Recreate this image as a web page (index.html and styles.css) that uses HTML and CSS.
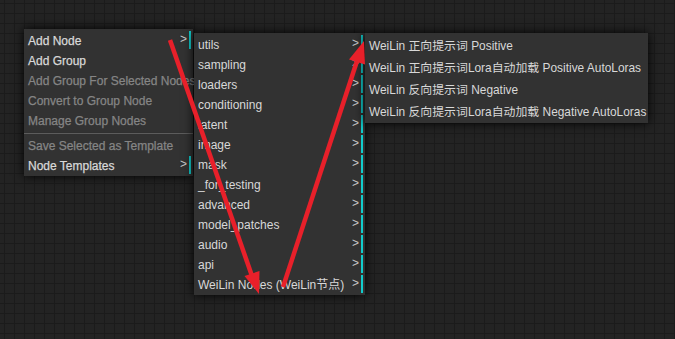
FILE: index.html
```html
<!DOCTYPE html>
<html lang="en">
<head>
<meta charset="utf-8">
<title>Context menu</title>
<link rel="stylesheet" href="styles.css">
</head>
<body>
<div class="canvas">
  <div class="menu menu-main">
    <div class="entry sub">Add Node</div>
    <div class="entry">Add Group</div>
    <div class="entry disabled">Add Group For Selected Nodes</div>
    <div class="entry disabled">Convert to Group Node</div>
    <div class="entry disabled">Manage Group Nodes</div>
    <div class="separator"></div>
    <div class="entry disabled">Save Selected as Template</div>
    <div class="entry sub">Node Templates</div>
  </div>
  <div class="menu menu-cats">
    <div class="entry sub">utils</div>
    <div class="entry sub">sampling</div>
    <div class="entry sub">loaders</div>
    <div class="entry sub">conditioning</div>
    <div class="entry sub">latent</div>
    <div class="entry sub">image</div>
    <div class="entry sub">mask</div>
    <div class="entry sub">_for_testing</div>
    <div class="entry sub">advanced</div>
    <div class="entry sub">model_patches</div>
    <div class="entry sub">audio</div>
    <div class="entry sub">api</div>
    <div class="entry sub">WeiLin Nodes (WeiLin节点)</div>
  </div>
  <div class="menu menu-weilin">
    <div class="entry">WeiLin 正向提示词 Positive</div>
    <div class="entry">WeiLin 正向提示词Lora自动加载 Positive AutoLoras</div>
    <div class="entry">WeiLin 反向提示词 Negative</div>
    <div class="entry">WeiLin 反向提示词Lora自动加载 Negative AutoLoras</div>
  </div>
  <svg class="annot" width="675" height="339" viewBox="0 0 675 339">
    <line x1="170" y1="40" x2="252" y2="276" class="arrow-line"/>
    <polygon points="259,294 259.5,271 244.5,276" class="arrow-head"/>
    <line x1="283" y1="287" x2="357" y2="61" class="arrow-line"/>
    <polygon points="364,41 365,64.5 349,59.5" class="arrow-head"/>
  </svg>
</div>
</body>
</html>
```

FILE: styles.css
```css
html, body {
  margin: 0;
  padding: 0;
}

body {
  width: 675px;
  height: 339px;
  overflow: hidden;
  background-color: #232323;
  background-image:
    linear-gradient(#1b1b1b 1px, transparent 1px),
    linear-gradient(90deg, #1b1b1b 1px, transparent 1px);
  background-size: 10px 10px;
  background-position: 4px 3px;
  font-family: "Liberation Sans", "Noto Sans CJK SC", sans-serif;
}

.canvas {
  position: relative;
  width: 675px;
  height: 339px;
}

.menu {
  position: absolute;
  background-color: #323232;
  box-shadow: 0 0 10px #000;
  font-size: 12px;
  color: #d8d8d8;
}

.menu-main {
  left: 24px;
  top: 29px;
  width: 169px;
  -webkit-text-stroke: 0.25px currentColor;
}

.menu-cats {
  left: 194px;
  top: 33px;
  width: 171px;
}

.menu-weilin {
  left: 365px;
  top: 33px;
  width: 283px;
  font-size: 11.9px;
}

.entry {
  position: relative;
  margin: 2px;
  padding: 3px 2px 1px 2px;
  line-height: 14px;
  white-space: nowrap;
}

.menu-weilin .entry {
  line-height: 16px;
}

.entry.disabled {
  color: #858585;
}

.entry.sub {
  padding-right: 20px;
  border-right: 2px solid #12cccc;
}

.entry.sub::after {
  content: ">";
  position: absolute;
  top: 1px;
  right: 2px;
  color: #c8c8c8;
  -webkit-text-stroke: 0;
}

.separator {
  margin: 3px 0 2px 0;
  height: 0;
  border-top: 1px solid #303030;
  border-bottom: 1px solid #5c5c5c;
}

.annot {
  position: absolute;
  left: 0;
  top: 0;
  pointer-events: none;
}

.arrow-line {
  stroke: #e8202a;
  stroke-width: 4.5;
}

.arrow-head {
  fill: #e8202a;
}
```
